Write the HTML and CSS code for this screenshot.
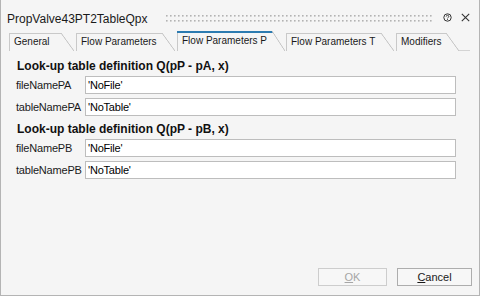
FILE: index.html
```html
<!DOCTYPE html>
<html>
<head>
<meta charset="utf-8">
<link rel="stylesheet" href="styles.css">
</head>
<body>
<div class="window">
  <div class="titlebar">
    <span class="title">PropValve43PT2TableQpx</span>
    <svg class="grip" width="268" height="8" viewBox="0 0 268 8">
      <defs>
        <pattern id="dots" width="4" height="5" patternUnits="userSpaceOnUse">
          <rect x="0" y="0" width="1.6" height="1.6" fill="#b3b3b3"/>
        </pattern>
      </defs>
      <rect x="0" y="0" width="268" height="7" fill="url(#dots)"/>
    </svg>
    <svg class="icon help" width="9" height="9" viewBox="0 0 9 9">
      <circle cx="4.5" cy="4.5" r="3.7" fill="none" stroke="#333" stroke-width="1"/>
      <path d="M3.2 3.6 Q3.2 2.3 4.5 2.3 Q5.8 2.3 5.8 3.5 Q5.8 4.2 4.9 4.6 Q4.5 4.8 4.5 5.4" fill="none" stroke="#333" stroke-width="0.9"/>
      <rect x="4.05" y="6.1" width="0.9" height="0.9" fill="#333"/>
    </svg>
    <svg class="icon close" width="9" height="9" viewBox="0 0 9 9">
      <path d="M0.8 0.8 L8.2 8.2 M8.2 0.8 L0.8 8.2" stroke="#333" stroke-width="1.1"/>
    </svg>
  </div>
  <div class="tabs">
    <div class="tab t1">General</div>
    <div class="tab t2">Flow Parameters</div>
    <div class="tab t3 active">Flow Parameters P</div>
    <div class="tab t4">Flow Parameters T</div>
    <div class="tab t5">Modifiers</div>
    <div class="tabline"></div>
  </div>
  <div class="content">
    <div class="heading">Look-up table definition Q(pP - pA, x)</div>
    <div class="row"><span class="label">fileNamePA</span><div class="input">'NoFile'</div></div>
    <div class="row"><span class="label">tableNamePA</span><div class="input">'NoTable'</div></div>
    <div class="heading h2">Look-up table definition Q(pP - pB, x)</div>
    <div class="row"><span class="label">fileNamePB</span><div class="input">'NoFile'</div></div>
    <div class="row"><span class="label">tableNamePB</span><div class="input">'NoTable'</div></div>
  </div>
  <div class="buttons">
    <div class="btn ok"><u>O</u>K</div>
    <div class="btn cancel"><u>C</u>ancel</div>
  </div>
</div>
</body>
</html>
```
FILE: styles.css
```css
html, body {
  margin: 0;
  padding: 0;
}
body {
  width: 480px;
  height: 296px;
  background: #f5f5f5;
  font-family: "Liberation Sans", Arial, sans-serif;
  font-size: 12px;
  color: #1a1a1a;
  overflow: hidden;
}
.window {
  box-sizing: border-box;
  width: 480px;
  height: 296px;
  border: 1px solid #b4b4b4;
  border-top: none;
  display: flex;
  flex-direction: column;
}
.titlebar {
  height: 31px;
  display: flex;
  align-items: center;
  padding-left: 6px;
  box-sizing: border-box;
  padding-top: 4px;
}
.title {
  font-size: 12px;
  color: #1a1a1a;
  white-space: nowrap;
  margin-top: 2px;
}
.grip {
  margin-left: 18px;
  margin-top: 3px;
  flex: none;
}
.icon {
  flex: none;
  display: block;
}
.help {
  margin-left: 9px;
}
.close {
  margin-left: 9px;
}
.tabs {
  display: flex;
  align-items: flex-end;
  height: 20px;
  margin-left: 8px;
}
.tab {
  position: relative;
  box-sizing: border-box;
  height: 18px;
  line-height: 18px;
  border-left: 1px solid #c9c9c9;
  padding-left: 4px;
  margin-right: 2px;
  white-space: nowrap;
  font-size: 10px;
  color: #1a1a1a;
}
.tab::before {
  content: "";
  position: absolute;
  top: 0;
  left: 0;
  right: 12px;
  height: 1px;
  background: #c9c9c9;
}
.tab::after {
  content: "";
  position: absolute;
  top: 0;
  right: 0;
  width: 13px;
  height: 100%;
  background: linear-gradient(to top right, transparent calc(50% - 0.7px), #c9c9c9 calc(50% - 0.2px), #c9c9c9 calc(50% + 0.2px), transparent calc(50% + 0.7px));
}
.t1 { width: 65px; }
.t2 { width: 99px; }
.t3 { width: 108px; margin-right: 1px; }
.t4 { width: 108px; }
.t5 { width: 63px; }
.tab.active {
  height: 20px;
  line-height: 20px;
}
.tab.active::before {
  height: 2px;
  background: #2c7bb0;
  left: -1px;
}
.tabline {
  width: 11px;
  height: 1px;
  background: #d4d4d4;
  margin-left: -2px;
}
.content {
  padding: 6px 23px 0 15px;
}
.heading {
  font-weight: bold;
  font-size: 12px;
  height: 19px;
  line-height: 19px;
  padding-left: 1px;
  color: #111;
}
.heading.h2 {
  margin-top: 2px;
}
.row {
  display: flex;
  align-items: center;
  margin-bottom: 4px;
}
.label {
  width: 69px;
  font-size: 11px;
  letter-spacing: -0.2px;
  color: #1a1a1a;
}
.input {
  flex: 1;
  box-sizing: border-box;
  height: 18px;
  line-height: 16px;
  border: 1px solid #bdbdbd;
  background: #fff;
  padding-left: 2px;
  font-size: 11px;
  letter-spacing: -0.2px;
  color: #000;
}
.buttons {
  margin-top: auto;
  display: flex;
  justify-content: flex-end;
  gap: 10px;
  padding: 0 7px 9px 0;
}
.btn {
  box-sizing: border-box;
  height: 18px;
  line-height: 16px;
  text-align: center;
  border: 1px solid #adadad;
  background: #f7f7f7;
  font-size: 11px;
}
.btn.ok {
  width: 69px;
  color: #a6a6a6;
  border-color: #cdcdcd;
}
.btn.cancel {
  width: 75px;
  color: #1a1a1a;
}
```
